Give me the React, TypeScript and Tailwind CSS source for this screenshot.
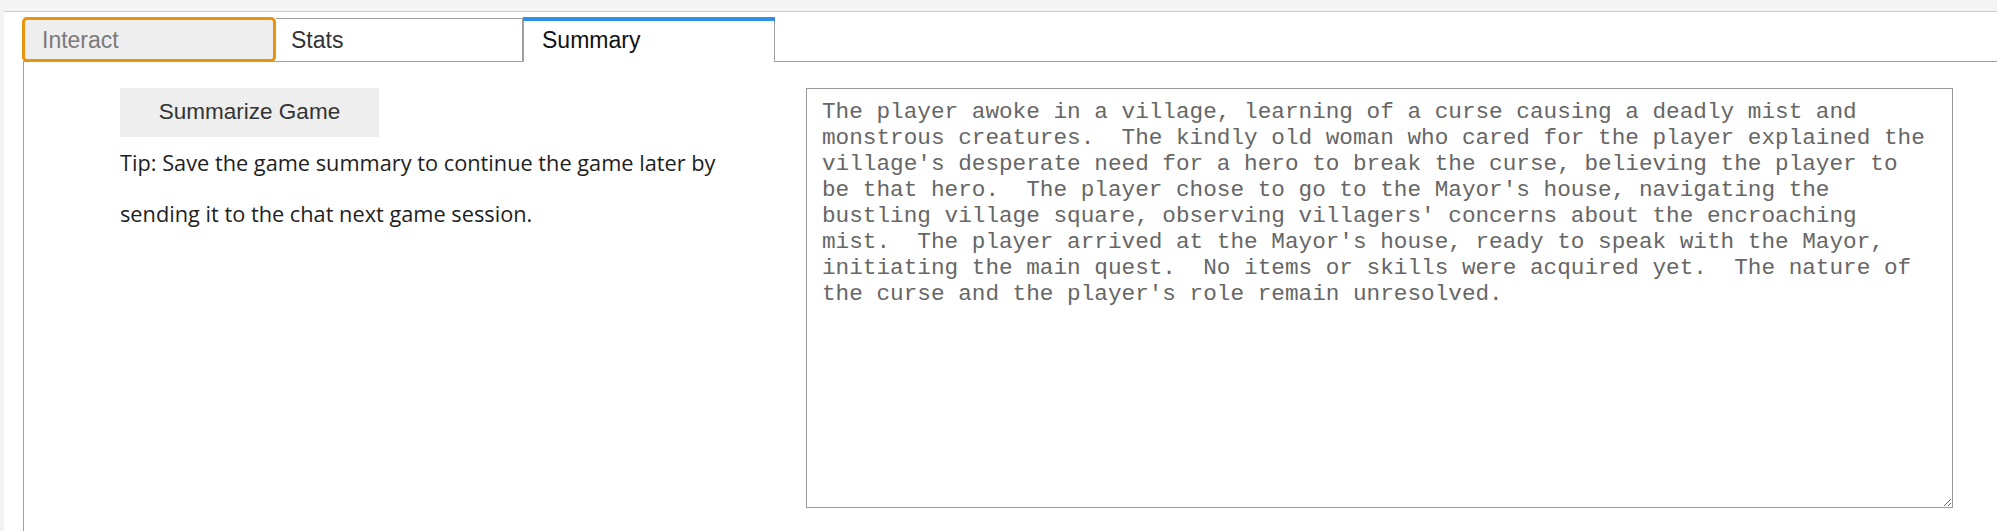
import React from "react";

const SUMMARY =
  "The player awoke in a village, learning of a curse causing a deadly mist and monstrous creatures.  The kindly old woman who cared for the player explained the village's desperate need for a hero to break the curse, believing the player to be that hero.  The player chose to go to the Mayor's house, navigating the bustling village square, observing villagers' concerns about the encroaching mist.  The player arrived at the Mayor's house, ready to speak with the Mayor, initiating the main quest.  No items or skills were acquired yet.  The nature of the curse and the player's role remain unresolved.";

export default function App() {
  return (
    <div className="h-screen w-full bg-[#f4f4f4] pt-[11px] pl-[4px] font-['Liberation_Sans',Arial,sans-serif] overflow-hidden">
      <div className="h-full bg-white border-t border-[#cccccc] pl-[19px] pt-[5px] flex flex-col">
        {/* Tabs */}
        <div className="flex items-end h-[45px] relative z-10 -mb-px">
          <div className="ml-[-1px] w-[254px] h-[45px] border-[3px] border-[#e8940f] rounded-[5px] bg-[#eeeeee] flex items-center pl-[17px] pt-[1px] text-[23px] text-[#7a7a7a]">
            Interact
          </div>
          <div className="w-[247px] h-[44px] border border-l-0 border-[#a0a0a0] bg-white flex items-center pl-[15px] pt-[1px] text-[23px] text-[#333333]">
            Stats
          </div>
          <div className="w-[252px] h-[45px] flex flex-col">
            <div className="h-[4px] bg-[#2f8fea] shrink-0" />
            <div className="flex-1 border-x border-[#a0a0a0] bg-white flex items-center pl-[18px] pb-[2px] text-[23px] text-[#111111]">
              Summary
            </div>
          </div>
        </div>
        {/* Panel */}
        <div className="flex-1 border-t border-l border-[#a0a0a0] flex pl-[96px] pt-[26px]">
          <div className="w-[686px] shrink-0 flex flex-col">
            <button className="w-[259px] h-[49px] bg-[#eeeeee] text-[22.5px] text-[#333333] flex items-center justify-center pb-[1px]">
              Summarize Game
            </button>
            <p className="w-[640px] mt-[1px] font-['Open_Sans',sans-serif] text-[21.75px] leading-[50.5px] text-[#1e1e1e]">
              Tip: Save the game summary to continue the game later by sending it to the chat next game session.
            </p>
          </div>
          <textarea
            readOnly
            defaultValue={SUMMARY}
            className="w-[1147px] h-[420px] shrink-0 border border-[#999999] pl-[15px] pr-[18px] pt-[10px] font-['Liberation_Mono',monospace] text-[22.7px] leading-[26px] text-[#666666] outline-none resize bg-white"
          />
        </div>
      </div>
    </div>
  );
}
